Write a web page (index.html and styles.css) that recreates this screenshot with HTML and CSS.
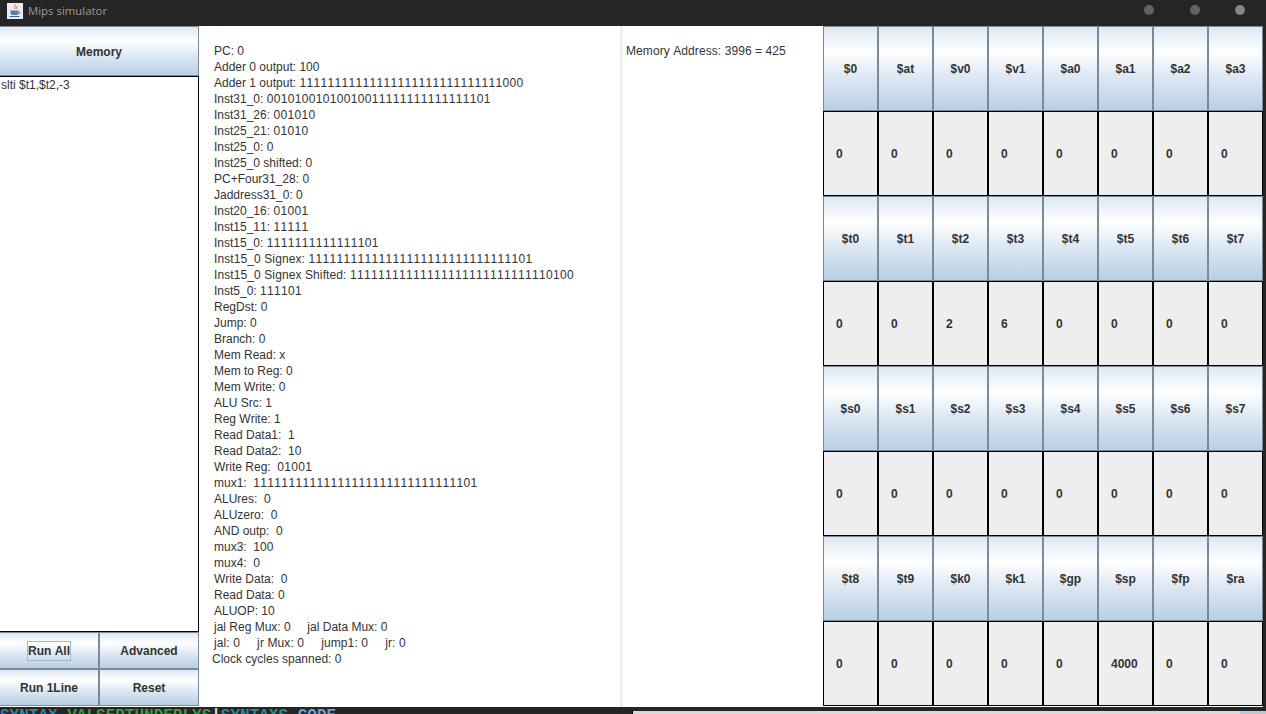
FILE: index.html
```html
<!DOCTYPE html>
<html>

<head>
    <meta charset="utf-8">
    <title>Mips simulator</title>
    <link rel="stylesheet" href="styles.css">
</head>

<body>
    <div class="titlebar">
        <svg class="app-icon" width="16" height="16" viewBox="0 0 16 16">
            <rect width="16" height="16" fill="#e9edf2" />
            <path d="M8 1.5c1.5 1.5-1.5 2.5 0 4.5M10 3c.8 1-1.2 1.800 0 3" fill="none" stroke="#d9662a" stroke-width="1" />
            <path d="M3.500 7.500h8v2.500c0 1.500-1.200 2-2.500 2h-3c-1.300 0-2.500-.5-2.500-2z" fill="#5a7fa6" />
            <path d="M11.500 8.500c2 0 2 2.500-.5 2.500" fill="none" stroke="#5a7fa6" stroke-width="1" />
            <path d="M2.500 13.500h10" stroke="#3d5f85" stroke-width="1" />
        </svg>
        <span class="app-title">Mips simulator</span>
        <div class="window-dots">
            <span class="dot"></span>
            <span class="dot"></span>
            <span class="dot dot-close"></span>
        </div>
    </div>

    <div class="window">
        <div class="left-col">
            <div class="btn memory-btn">Memory</div>
            <div class="code-area">slti $t1,$t2,-3</div>
            <div class="btn-grid">
                <div class="btn"><span class="focused">Run All</span></div>
                <div class="btn">Advanced</div>
                <div class="btn">Run 1Line</div>
                <div class="btn">Reset</div>
            </div>
        </div>

        <div class="signals">
            <div>PC: 0</div>
            <div>Adder 0 output: 100</div>
            <div>Adder 1 output: <span class="bits">11111111111111111111111111111000</span></div>
            <div>Inst31_0: <span class="bits">00101001010010011111111111111101</span></div>
            <div>Inst31_26: <span class="bits">001010</span></div>
            <div>Inst25_21: <span class="bits">01010</span></div>
            <div>Inst25_0: 0</div>
            <div>Inst25_0 shifted: 0</div>
            <div>PC+Four31_28: 0</div>
            <div>Jaddress31_0: 0</div>
            <div>Inst20_16: <span class="bits">01001</span></div>
            <div>Inst15_11: <span class="bits">11111</span></div>
            <div>Inst15_0: <span class="bits">1111111111111101</span></div>
            <div class="loose">Inst15_0 Signex: <span class="bits">11111111111111111111111111111101</span></div>
            <div class="loose">Inst15_0 Signex Shifted: <span class="bits">11111111111111111111111111110100</span></div>
            <div>Inst5_0: <span class="bits">111101</span></div>
            <div>RegDst: 0</div>
            <div>Jump: 0</div>
            <div>Branch: 0</div>
            <div>Mem Read: x</div>
            <div>Mem to Reg: 0</div>
            <div>Mem Write: 0</div>
            <div>ALU Src: 1</div>
            <div>Reg Write: 1</div>
            <div>Read Data1:  1</div>
            <div>Read Data2:  10</div>
            <div>Write Reg:  <span class="bits">01001</span></div>
            <div>mux1:  <span class="bits">11111111111111111111111111111101</span></div>
            <div>ALUres:  0</div>
            <div>ALUzero:  0</div>
            <div>AND outp:  0</div>
            <div>mux3:  100</div>
            <div>mux4:  0</div>
            <div>Write Data:  0</div>
            <div>Read Data: 0</div>
            <div>ALUOP: 10</div>
            <div>jal Reg Mux: 0     jal Data Mux: 0</div>
            <div class="loose">jal: 0     jr Mux: 0     jump1: 0     jr: 0</div>
            <div class="clock-line">Clock cycles spanned: 0</div>
        </div>

        <div class="memory-panel">Memory Address: 3996 = 425</div>

        <div class="registers">
            <div class="btn">$0</div>
            <div class="btn">$at</div>
            <div class="btn">$v0</div>
            <div class="btn">$v1</div>
            <div class="btn">$a0</div>
            <div class="btn">$a1</div>
            <div class="btn">$a2</div>
            <div class="btn">$a3</div>
            <div class="reg-value">0</div>
            <div class="reg-value">0</div>
            <div class="reg-value">0</div>
            <div class="reg-value">0</div>
            <div class="reg-value">0</div>
            <div class="reg-value">0</div>
            <div class="reg-value">0</div>
            <div class="reg-value">0</div>

            <div class="btn">$t0</div>
            <div class="btn">$t1</div>
            <div class="btn">$t2</div>
            <div class="btn">$t3</div>
            <div class="btn">$t4</div>
            <div class="btn">$t5</div>
            <div class="btn">$t6</div>
            <div class="btn">$t7</div>
            <div class="reg-value">0</div>
            <div class="reg-value">0</div>
            <div class="reg-value">2</div>
            <div class="reg-value">6</div>
            <div class="reg-value">0</div>
            <div class="reg-value">0</div>
            <div class="reg-value">0</div>
            <div class="reg-value">0</div>

            <div class="btn">$s0</div>
            <div class="btn">$s1</div>
            <div class="btn">$s2</div>
            <div class="btn">$s3</div>
            <div class="btn">$s4</div>
            <div class="btn">$s5</div>
            <div class="btn">$s6</div>
            <div class="btn">$s7</div>
            <div class="reg-value">0</div>
            <div class="reg-value">0</div>
            <div class="reg-value">0</div>
            <div class="reg-value">0</div>
            <div class="reg-value">0</div>
            <div class="reg-value">0</div>
            <div class="reg-value">0</div>
            <div class="reg-value">0</div>

            <div class="btn">$t8</div>
            <div class="btn">$t9</div>
            <div class="btn">$k0</div>
            <div class="btn">$k1</div>
            <div class="btn">$gp</div>
            <div class="btn">$sp</div>
            <div class="btn">$fp</div>
            <div class="btn">$ra</div>
            <div class="reg-value">0</div>
            <div class="reg-value">0</div>
            <div class="reg-value">0</div>
            <div class="reg-value">0</div>
            <div class="reg-value">0</div>
            <div class="reg-value">4000</div>
            <div class="reg-value">0</div>
            <div class="reg-value">0</div>
        </div>
    </div>

    <div class="behind">
        <div class="behind-code"><span class="teal">SYNTAX</span> <span class="green">VALSEPTUNDERLYS</span>|<span class="teal">SYNTAXS</span> <span class="blue">CODE</span></div>
        <div class="behind-editor"></div>
        <div class="behind-corner"></div>
    </div>
</body>

</html>
```

FILE: styles.css
```css
html,
body {
    margin: 0;
    height: 100%;
    overflow: hidden;
}

body {
    display: flex;
    flex-direction: column;
    width: 1266px;
    height: 714px;
    background: #252525;
    font-family: "Liberation Sans", Arial, sans-serif;
    font-size: 12px;
    font-kerning: none;
    color: #333;
}

.titlebar {
    display: flex;
    align-items: center;
    height: 26px;
    flex: none;
    padding-left: 7px;
    box-sizing: border-box;
    background: #252525;
}

.app-icon {
    margin-top: -4px;
}

.app-title {
    margin-left: 5px;
    margin-top: -5px;
    font-family: "Open Sans", sans-serif;
    font-size: 11.4px;
    color: #9c9c9c;
}

.window-dots {
    display: flex;
    gap: 35.5px;
    margin-left: auto;
    margin-right: 21px;
    margin-top: -6px;
}

.dot {
    width: 10px;
    height: 10px;
    border-radius: 50%;
    background: #636363;
}

.dot-close {
    background: #858585;
}

.window {
    display: flex;
    flex: none;
    width: 1263px;
    height: 681px;
    background: #fff;
}

.btn {
    display: flex;
    align-items: center;
    justify-content: center;
    box-sizing: border-box;
    border: 1px solid #7a8a99;
    background: linear-gradient(#dde8f3 0%, #fff 30%, #dde8f3 60%, #b8cfe5 100%);
    font-weight: bold;
    color: #333;
}

.left-col {
    display: flex;
    flex-direction: column;
    width: 199px;
    height: 680px;
    flex: none;
}

.memory-btn {
    height: 50px;
    flex: none;
    border-left: 0;
    padding-top: 2px;
}

.code-area {
    flex: 1;
    box-sizing: border-box;
    padding: 1px;
    border-top: 1px solid #000;
    border-right: 1px solid #000;
    border-bottom: 1px solid #000;
    line-height: 15px;
}

.btn-grid {
    display: grid;
    grid-template-columns: 99px 100px;
    grid-template-rows: 37px 37px;
    flex: none;
}

.btn-grid .btn:nth-child(odd) {
    border-left: 0;
}

.focused {
    padding: 2px 0;
    outline: 1px solid #a3b8cc;
}

.signals {
    width: 421px;
    flex: none;
    box-sizing: border-box;
    padding: 17px 0 0 15px;
    line-height: 16px;
}

.signals div {
    white-space: pre;
}

.loose {
    letter-spacing: 0.1px;
}

.bits {
    letter-spacing: 0.33px;
}

.clock-line {
    margin-left: -2px;
}

.memory-panel {
    width: 203px;
    flex: none;
    box-sizing: border-box;
    padding: 17px 0 0 3px;
    border-left: 3px solid #eee;
    line-height: 16px;
    letter-spacing: 0.08px;
}

.registers {
    display: grid;
    grid-template-columns: repeat(8, 55px);
    grid-auto-rows: 85px;
    width: 440px;
    flex: none;
}

.reg-value {
    display: flex;
    align-items: center;
    box-sizing: border-box;
    padding-left: 12px;
    border: 1px solid #000;
    background: #eee;
    font-weight: bold;
}

.behind {
    display: flex;
    flex: 1;
    overflow: hidden;
}

.behind-code {
    width: 632px;
    flex: none;
    height: 6px;
    overflow: hidden;
    padding-top: 1px;
    font-family: "Liberation Mono", monospace;
    font-size: 16px;
    font-weight: bold;
    line-height: 16px;
    white-space: pre;
    color: #ddd;
}

.teal {
    color: #2a8a9a;
}

.green {
    color: #3a9a4a;
}

.blue {
    color: #6f9fe0;
}

.behind-editor {
    flex: 1;
    margin-top: 4px;
    background: #d9d9d9;
    border-left: 1px solid #000;
}

.behind-corner {
    width: 26px;
    flex: none;
    margin-top: 4px;
    background: #b9c7d6;
}
```
